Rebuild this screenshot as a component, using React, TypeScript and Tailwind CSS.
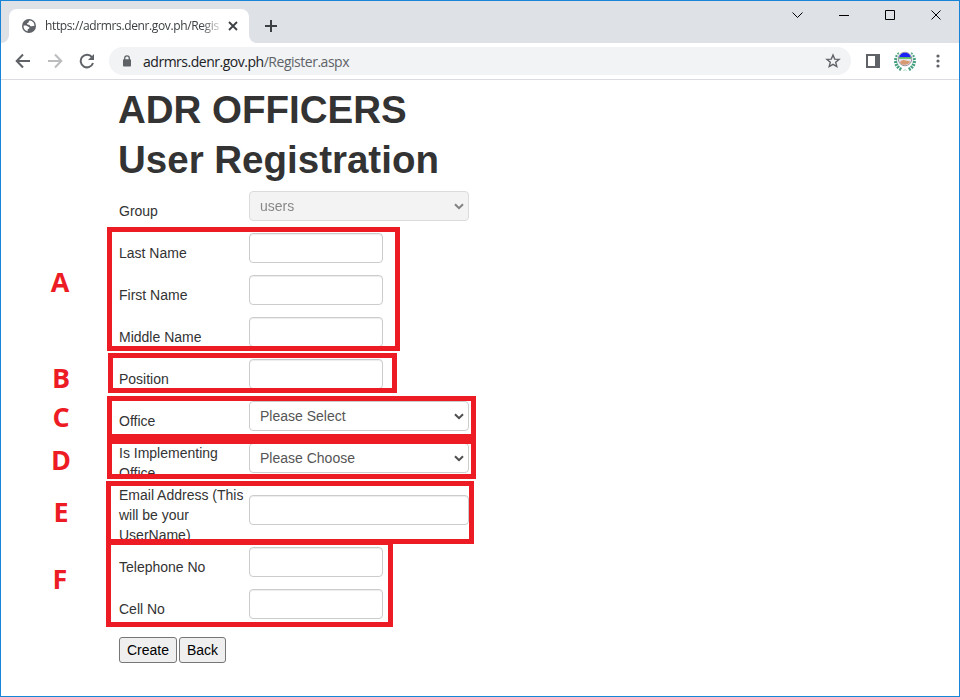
import React from "react";

const LEAVES = [-48, -30, -12, 6, 24, 42, 60, 120, 138, 156, 174, 192, 210, 228];

function TabStrip() {
  return (
    <div className="flex h-[42px] shrink-0 items-start bg-[#dee1e6]">
      <div className="relative ml-2 mt-2 flex h-[34px] w-[240px] items-center rounded-t-lg bg-white pl-[13px]">
        <svg className="absolute -left-2 bottom-0" width="8" height="8">
          <path d="M8 0V8H0A8 8 0 0 0 8 0Z" fill="#fff" />
        </svg>
        <svg className="absolute -right-2 bottom-0" width="8" height="8">
          <path d="M0 0V8H8A8 8 0 0 1 0 0Z" fill="#fff" />
        </svg>
        <svg width="14" height="14" viewBox="0 0 14 14" className="shrink-0">
          <circle cx="7" cy="7" r="7" fill="#5f6368" />
          <path
            d="M7.7 1.5C6.7 2 6.8 2.8 6.5 3.4 6.2 4 5 3.8 5 4.7 5 5.8 6 5.6 7 5.7 8.1 5.8 7.8 7 8.7 7.2 9.8 7.4 10.4 6.8 12.4 7A5.5 5.5 0 0 0 7.7 1.5ZM1.6 6.6C3 6.7 4.5 6.5 5.5 7.3 6.5 8 7.6 8.2 7.5 9.1 7.4 10 6 9.8 5.7 10.6 5.5 11.2 5.8 11.7 5.6 12.3A5.5 5.5 0 0 1 1.6 6.6Z"
            fill="#fff"
          />
        </svg>
        <div className="ml-[9px] w-[174px] whitespace-nowrap font-['Open_Sans',sans-serif] text-[12px] tracking-[-0.37px] text-[#3c4043] [mask-image:linear-gradient(to_right,black_156px,transparent_180px)]">
          https://adrmrs.denr.gov.ph/Regis
        </div>
        <svg width="10" height="10" className="ml-[9px]" fill="none" stroke="#3c4043" strokeWidth="1.8">
          <path d="M1 1 9 9M9 1 1 9" />
        </svg>
      </div>
      <svg width="12" height="12" className="ml-4 mt-[19px]" stroke="#3c4043" strokeWidth="2">
        <path d="M6 0V12M0 6H12" />
      </svg>
      <div className="ml-auto mr-[17px] mt-2 flex items-center gap-[36px]">
        <svg width="11" height="12" fill="none" stroke="#000" strokeWidth="1">
          <path d="M.5 3.5 5.5 8.5 10.5 3.5" />
        </svg>
        <svg width="10" height="12" stroke="#000">
          <path d="M0 6.5H10" />
        </svg>
        <svg width="10" height="12" fill="none" stroke="#000">
          <path d="M.5 1.5H9.5V10.5H.5Z" />
        </svg>
        <svg width="11" height="12" fill="none" stroke="#000">
          <path d="M.5 1.5 9.5 10.5M9.5 1.5 .5 10.5" />
        </svg>
      </div>
    </div>
  );
}

function Seal() {
  return (
    <svg width="24" height="24" viewBox="0 0 24 24" className="ml-[13px]">
      {LEAVES.map((deg) => {
        const a = (deg * Math.PI) / 180;
        return (
          <path
            key={deg}
            d={`M${12 + 7.6 * Math.cos(a)} ${12 + 7.6 * Math.sin(a)}L${12 + 11 * Math.cos(a)} ${12 + 11 * Math.sin(a)}`}
            stroke="#46a080"
            strokeWidth="2"
          />
        );
      })}
      <circle cx="12" cy="10" r="8" fill="#fff" />
      <circle cx="12" cy="10" r="6.8" fill="#e6e3ea" stroke="#8f8a9c" strokeWidth=".9" />
      <path d="M6 8.6A6.2 6.6 0 0 1 18 8.6Z" fill="#1c22f4" />
      <path d="M6 8.2H18V9.8H6Z" fill="#4dc04d" />
      <path d="M7 13Q9 10.4 12 11.2T17.4 12.4Q16 15.4 12 15.8T7 13Z" fill="#d79a72" />
      <path d="M10.5 22 12 20.3 13.5 22" stroke="#a5d8c5" fill="none" />
    </svg>
  );
}

function Toolbar() {
  return (
    <div className="flex h-[37px] shrink-0 items-center border-b border-[#dadce0] bg-white pl-[14px] pr-[17px]">
      <svg width="16" height="16" fill="none" stroke="#5f6368" strokeWidth="2">
        <path d="M15 8H2M8 1.5 1.7 8 8 14.5" />
      </svg>
      <svg width="16" height="16" fill="none" stroke="#babcbe" strokeWidth="2" className="ml-4">
        <path d="M1 8H14M8 1.5 14.3 8 8 14.5" />
      </svg>
      <svg width="16" height="16" className="ml-4">
        <path d="M13 4.2A6.3 6.3 0 1 0 14 10" fill="none" stroke="#5f6368" strokeWidth="2" />
        <path d="M15 1V7H9Z" fill="#5f6368" />
      </svg>
      <div className="ml-[14px] flex h-7 w-[742px] items-center rounded-full bg-[#f1f3f4] pl-[14px] pr-[10px]">
        <svg width="8" height="12" viewBox="0 0 8 12">
          <path d="M1.7 5V3.2A2.3 2.3 0 0 1 6.3 3.2V5" fill="none" stroke="#5f6368" strokeWidth="1.3" />
          <rect y="4.3" width="8" height="7.2" rx=".8" fill="#5f6368" />
        </svg>
        <span className="ml-3 whitespace-nowrap font-['Open_Sans',sans-serif] text-[14px] tracking-[-0.48px] text-[#202124]">
          adrmrs.denr.gov.ph<span className="text-[#5f6368]">/Register.aspx</span>
        </span>
        <svg width="16" height="16" viewBox="0 0 16 16" className="ml-auto">
          <path
            d="M8 2 9.7 6.1 14.1 6.4 10.7 9.3 11.8 13.6 8 11.3 4.2 13.6 5.3 9.3 1.9 6.4 6.3 6.1Z"
            fill="none"
            stroke="#5f6368"
            strokeWidth="1.4"
          />
        </svg>
      </div>
      <svg width="14" height="14" className="ml-[15px]">
        <path fillRule="evenodd" d="M0 0H14V14H0ZM2 2V12H9V2Z" fill="#5f6368" />
      </svg>
      <Seal />
      <svg width="4" height="14" className="ml-auto mr-[2.5px]" fill="#5f6368">
        <circle cx="2" cy="2" r="1.6" />
        <circle cx="2" cy="7" r="1.6" />
        <circle cx="2" cy="12" r="1.6" />
      </svg>
    </div>
  );
}

function Row({ label, tall, top, children }: { label: string; tall?: boolean; top?: boolean; children: React.ReactNode }) {
  return (
    <div className={"flex " + (tall ? "h-[62px]" : "h-[42px]")}>
      <label className={"w-[130px] shrink-0 " + (tall || top ? "" : "pt-[10px]")}>{label}</label>
      <div className={tall ? "pt-[10px]" : ""}>{children}</div>
    </div>
  );
}

function TextBox({ wide }: { wide?: boolean }) {
  return (
    <input
      type="text"
      className={
        "block h-[30px] rounded border border-[#ccc] bg-white px-1.5 shadow-[inset_0_1px_1px_rgba(0,0,0,0.075)] outline-none " +
        (wide ? "w-[220px]" : "w-[134px]")
      }
    />
  );
}

function Chevron() {
  return (
    <svg width="10" height="7" className="pointer-events-none -ml-[15px]" fill="none" stroke="#4d4d4d" strokeWidth="2">
      <path d="M1 1.2 5 5.2 9 1.2" />
    </svg>
  );
}

function Select({ value, disabled }: { value: string; disabled?: boolean }) {
  return (
    <div className={"flex items-center " + (disabled ? "opacity-70" : "")}>
      <select
        disabled={disabled}
        className={
          "block h-[30px] w-[220px] appearance-none rounded border border-[#ccc] px-[10px] py-1 text-[14px] leading-5 text-[#555] opacity-100 " +
          (disabled ? "bg-[#eee]" : "bg-white")
        }
      >
        <option>{value}</option>
      </select>
      <Chevron />
    </div>
  );
}

const MARKS = [
  { letter: "A", box: "left-[107px] top-[227px] w-[293px] h-[124px]", at: "left-[46px] top-[266px]" },
  { letter: "B", box: "left-[108px] top-[353px] w-[289px] h-[40px]", at: "left-[47px] top-[362px]" },
  { letter: "C", box: "left-[107px] top-[396px] w-[369px] h-[43px]", at: "left-[47px] top-[401px]" },
  { letter: "D", box: "left-[107px] top-[439px] w-[369px] h-[40px]", at: "left-[47px] top-[444px]" },
  { letter: "E", box: "left-[106px] top-[481px] w-[368px] h-[63px]", at: "left-[47px] top-[496px]" },
  { letter: "F", box: "left-[106px] top-[540px] w-[287px] h-[87px]", at: "left-[46px] top-[563px]" },
];

export default function App() {
  return (
    <div className="relative h-[697px] w-[960px] overflow-hidden bg-white">
      <div className="flex h-full flex-col border border-[#1883d7]">
        <TabStrip />
        <Toolbar />
        <main className="pl-[118px] pt-[10px] font-['Liberation_Sans',Arial,sans-serif] text-[14px] leading-5 text-[#333]">
          <h1 className="-ml-px mb-[10px] text-[38.5px] font-bold leading-10">ADR OFFICERS</h1>
          <h1 className="-ml-px mb-[11px] text-[38.5px] font-bold leading-10">User Registration</h1>
          <Row label="Group"><Select value="users" disabled /></Row>
          <Row label="Last Name"><TextBox /></Row>
          <Row label="First Name"><TextBox /></Row>
          <Row label="Middle Name"><TextBox /></Row>
          <Row label="Position"><TextBox /></Row>
          <Row label="Office"><Select value="Please Select" /></Row>
          <Row label="Is Implementing Office" top><Select value="Please Choose" /></Row>
          <Row label="Email Address (This will be your UserName)" tall><TextBox wide /></Row>
          <Row label="Telephone No"><TextBox /></Row>
          <Row label="Cell No"><TextBox /></Row>
          <div className="mt-[6px] flex gap-[2px] text-black">
            <button className="h-[26px] w-[58px] rounded-[3px] border border-[#767676] bg-[#efefef]">Create</button>
            <button className="h-[26px] w-[47px] rounded-[3px] border border-[#767676] bg-[#efefef]">Back</button>
          </div>
        </main>
      </div>
      {MARKS.map((m) => (
        <React.Fragment key={m.letter}>
          <div className={"pointer-events-none absolute border-[5px] border-[#ed1c24] " + m.box} />
          <div
            className={
              "absolute w-7 text-center font-['Open_Sans',sans-serif] text-[27px] font-bold leading-8 text-[#ed1c24] " + m.at
            }
          >
            {m.letter}
          </div>
        </React.Fragment>
      ))}
    </div>
  );
}
